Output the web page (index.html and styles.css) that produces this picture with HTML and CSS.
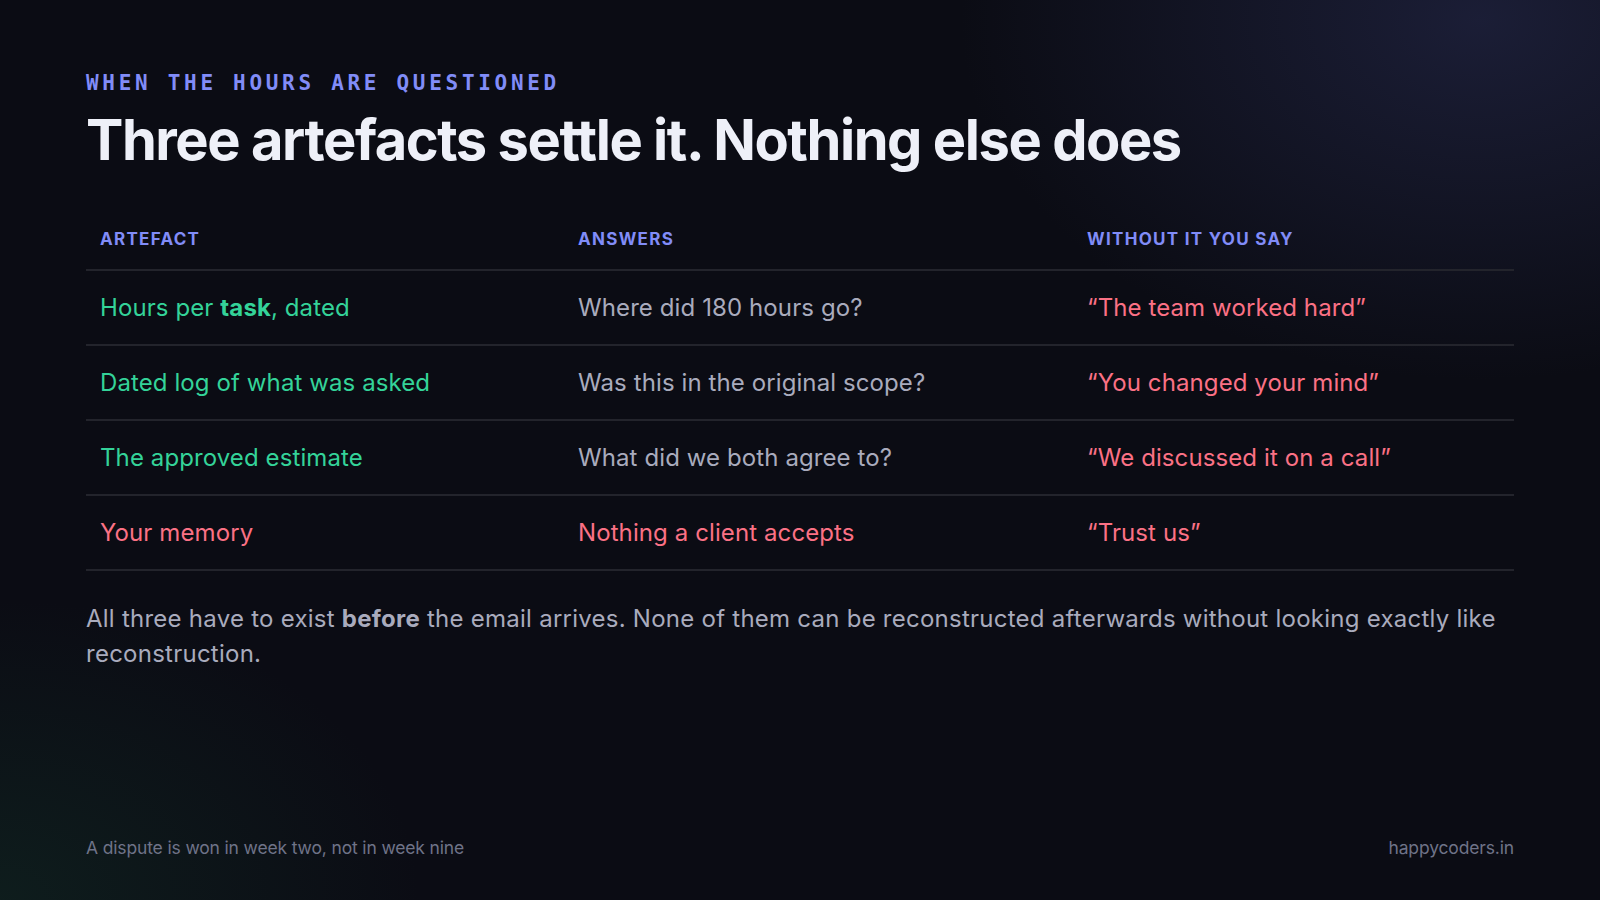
FILE: index.html
```html
<!DOCTYPE html>
<html lang="en">
<head>
<meta charset="utf-8">
<title>Three artefacts settle it</title>
<link rel="stylesheet" href="styles.css">
</head>
<body>
<div class="slide">
  <header class="head">
    <div class="eyebrow">WHEN THE HOURS ARE QUESTIONED</div>
    <h1 class="title">Three artefacts settle it. Nothing else does</h1>
  </header>
  <div class="table">
    <div class="row thead">
      <div class="cell">ARTEFACT</div>
      <div class="cell">ANSWERS</div>
      <div class="cell">WITHOUT IT YOU SAY</div>
    </div>
    <div class="row">
      <div class="cell green">Hours per <b>task</b>, dated</div>
      <div class="cell muted">Where did 180 hours go?</div>
      <div class="cell red">“The team worked hard”</div>
    </div>
    <div class="row">
      <div class="cell green">Dated log of what was asked</div>
      <div class="cell muted">Was this in the original scope?</div>
      <div class="cell red">“You changed your mind”</div>
    </div>
    <div class="row">
      <div class="cell green">The approved estimate</div>
      <div class="cell muted">What did we both agree to?</div>
      <div class="cell red">“We discussed it on a call”</div>
    </div>
    <div class="row">
      <div class="cell red">Your memory</div>
      <div class="cell red">Nothing a client accepts</div>
      <div class="cell red">“Trust us”</div>
    </div>
  </div>
  <p class="note">All three have to exist <b>before</b> the email arrives. None of them can be reconstructed afterwards without looking exactly like reconstruction.</p>
  <footer class="foot">
    <span>A dispute is won in week two, not in week nine</span>
    <span>happycoders.in</span>
  </footer>
</div>
</body>
</html>
```
FILE: styles.css
```css
html, body {
  margin: 0;
  padding: 0;
}
body {
  width: 1600px;
  height: 900px;
  overflow: hidden;
  background: #0b0c14;
  font-family: Inter, "Noto Sans", sans-serif;
}
.slide {
  box-sizing: border-box;
  width: 1600px;
  height: 900px;
  padding: 68px 86px 0 86px;
  display: flex;
  flex-direction: column;
  background:
    radial-gradient(ellipse 520px 360px at 1480px 20px, rgba(40, 44, 82, 0.55), rgba(40, 44, 82, 0) 100%),
    radial-gradient(ellipse 420px 300px at 0px 900px, rgba(20, 60, 45, 0.35), rgba(20, 60, 45, 0) 100%),
    #0b0c14;
}
.eyebrow {
  font-family: "DejaVu Sans Mono", "Liberation Mono", monospace;
  font-weight: bold;
  font-size: 21px;
  letter-spacing: 3.7px;
  color: #818cf8;
  line-height: 30px;
}
.title {
  margin: 10px 0 0 0;
  font-family: Inter, sans-serif;
  font-weight: 700;
  font-size: 56px;
  line-height: 64px;
  letter-spacing: -1.45px;
  color: #eef0f8;
}
.table {
  margin-top: 40px;
  display: flex;
  flex-direction: column;
}
.row {
  display: grid;
  grid-template-columns: 478px 509px 1fr;
  border-bottom: 2px solid #23242c;
  height: 73px;
  align-items: center;
}
.row.thead {
  height: 57px;
  align-items: start;
}
.thead .cell {
  padding-top: 17px;
  font-size: 17px;
  font-weight: 700;
  letter-spacing: 1.3px;
  color: #818cf8;
}
.cell {
  padding-left: 14px;
  font-size: 24px;
  letter-spacing: 0.1px;
}
.cell b {
  font-weight: 700;
}
.green { color: #34d399; }
.red { color: #fb7185; }
.muted { color: #a9abbd; }
.note {
  margin: 30px 0 0 0;
  font-size: 24px;
  line-height: 35px;
  letter-spacing: 0.25px;
  color: #a9abbd;
}
.note b {
  font-weight: 700;
}
.foot {
  margin-top: auto;
  margin-bottom: 42px;
  display: flex;
  justify-content: space-between;
  font-size: 17.5px;
  color: #6f7388;
  letter-spacing: -0.15px;
}
```
